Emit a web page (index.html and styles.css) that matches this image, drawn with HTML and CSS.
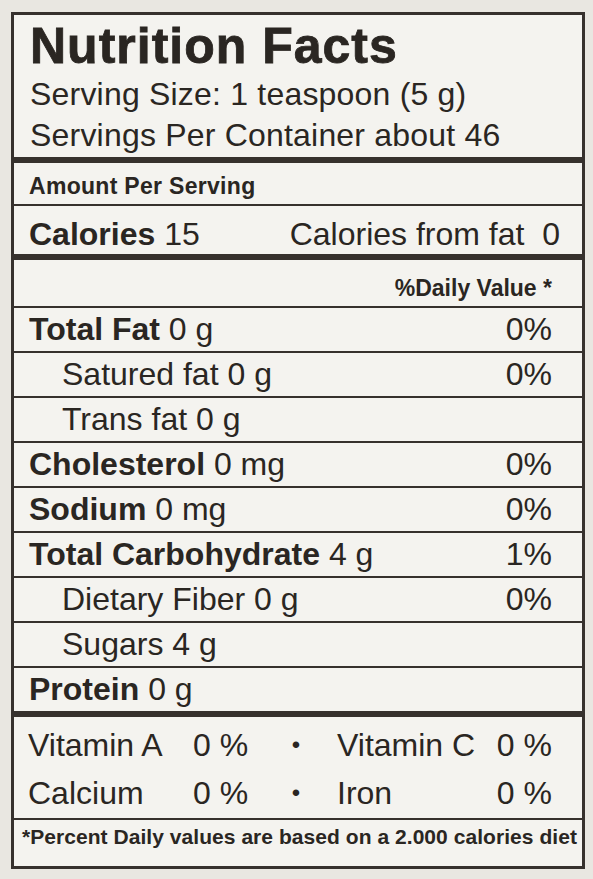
FILE: index.html
```html
<!DOCTYPE html>
<html lang="en">
<head>
    <meta charset="UTF-8">
    <meta name="viewport" content="width=device-width, initial-scale=1.0">
    <title>Nutrition Facts</title>
    <link rel="stylesheet" href="styles.css">
</head>
<body>
    <div class="label">
        <div class="head">
            <h1>Nutrition Facts</h1>
            <p>Serving Size: 1 teaspoon (5 g)</p>
            <p>Servings Per Container about 46</p>
        </div>
        <div class="row amount thick">Amount Per Serving</div>
        <div class="row calories">
            <span><b>Calories</b> 15</span>
            <span class="from-fat">Calories from fat&nbsp; 0</span>
        </div>
        <div class="row dv thick"><b>%Daily Value *</b></div>
        <div class="row"><span><b>Total Fat</b> 0 g</span><span>0%</span></div>
        <div class="row sub"><span>Satured fat 0 g</span><span>0%</span></div>
        <div class="row sub"><span>Trans fat 0 g</span></div>
        <div class="row"><span><b>Cholesterol</b> 0 mg</span><span>0%</span></div>
        <div class="row"><span><b>Sodium</b> 0 mg</span><span>0%</span></div>
        <div class="row"><span><b>Total Carbohydrate</b> 4 g</span><span>1%</span></div>
        <div class="row sub"><span>Dietary Fiber 0 g</span><span>0%</span></div>
        <div class="row sub"><span>Sugars 4 g</span></div>
        <div class="row"><span><b>Protein</b> 0 g</span></div>
        <div class="vitamins thick">
            <span>Vitamin A</span><span>0 %</span><span class="dot">&bull;</span><span class="name2">Vitamin C</span><span>0 %</span>
            <span>Calcium</span><span>0 %</span><span class="dot">&bull;</span><span class="name2">Iron</span><span>0 %</span>
        </div>
        <div class="footnote">*Percent Daily values are based on a 2.000 calories diet</div>
    </div>
</body>
</html>
```

FILE: styles.css
```css
body {
    margin: 0;
    padding: 12px 0 0 11px;
    background-color: #e9e7e1;
    font-family: "Liberation Sans", Arial, sans-serif;
    color: #2a2622;
}
.label {
    width: 568px;
    border: 3px solid #36312d;
    background-color: #f4f3ef;
}
.head {
    padding: 6px 0 1px 16px;
    height: 135px;
}
.head h1 {
    margin: 0;
    font-size: 50px;
    line-height: 50px;
    letter-spacing: 1px;
    -webkit-text-stroke: 0.8px #2a2622;
}
.head h1 + p {
    margin-top: 3px;
}
.head p {
    margin: 0;
    font-size: 32px;
    line-height: 41px;
    letter-spacing: 0.2px;
}
.row {
    display: flex;
    justify-content: space-between;
    align-items: center;
    box-sizing: border-box;
    height: 45px;
    padding: 0 30px 0 15px;
    border-top: 2px solid #36312d;
    font-size: 32px;
}
.row.sub {
    padding-left: 48px;
}
.thick {
    border-top: 6px solid #36312d;
}
.row.amount {
    height: 47px;
    padding-top: 6px;
    font-size: 23px;
    font-weight: bold;
    letter-spacing: 0.3px;
}
.row.calories {
    height: 50px;
    padding-top: 8px;
    padding-right: 22px;
}
.row.dv {
    height: 52px;
    padding-top: 10px;
    justify-content: flex-end;
    font-size: 23px;
}
.vitamins {
    display: grid;
    grid-template-columns: 165px 88px 30px 1fr auto;
    grid-auto-rows: 48px;
    align-items: center;
    height: 107px;
    box-sizing: border-box;
    padding: 4px 30px 0 14px;
    font-size: 32px;
}
.vitamins .dot {
    font-size: 24px;
    text-align: center;
}
.vitamins .name2 {
    padding-left: 26px;
}
.footnote {
    box-sizing: border-box;
    height: 48px;
    padding: 5px 0 0 8px;
    border-top: 2px solid #36312d;
    font-size: 21px;
    line-height: 24px;
    font-weight: bold;
    letter-spacing: 0.05px;
    white-space: nowrap;
}
```
